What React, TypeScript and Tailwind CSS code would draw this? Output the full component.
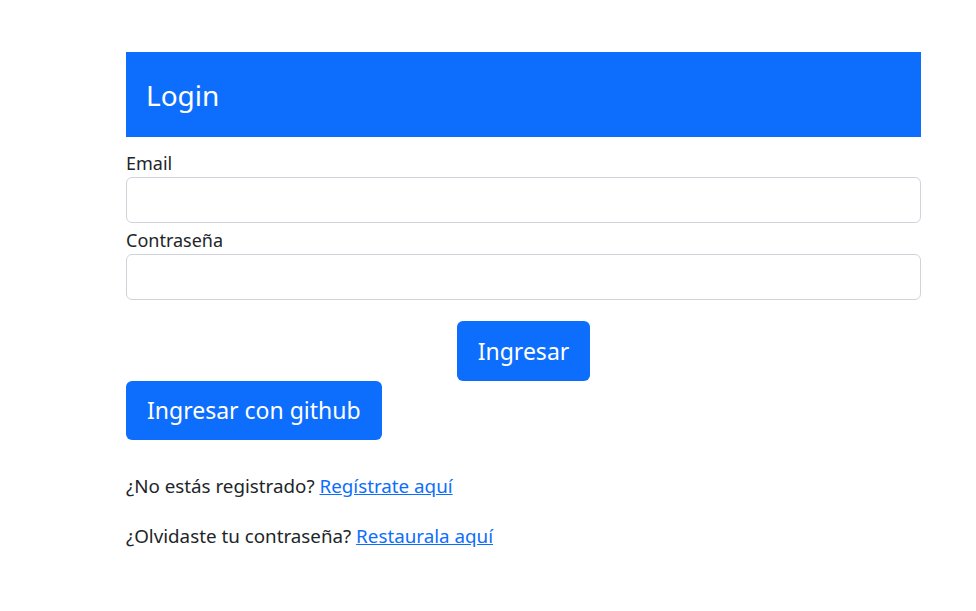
import React from 'react';

const Login = () => {
  return (
    <div className="min-h-[611px] bg-white text-[#212529] font-['Noto_Sans','Open_Sans',sans-serif]">
      <div className="ml-[126px] mr-[55px] pt-[52px]">
        <div className="h-[85px] bg-[#0d6efd] flex items-center px-5">
          <h2 className="text-[28px] text-white leading-none mt-px">Login</h2>
        </div>
        <form className="mt-[14px]">
          <label className="block h-6 text-[18px] leading-6">Email</label>
          <input type="email" className="mt-[2px] block w-full h-[46px] border border-[#ced4da] rounded-md bg-white" />
          <label className="block mt-[5px] h-6 text-[18px] leading-6">Contraseña</label>
          <input type="password" className="mt-[2px] block w-full h-[46px] border border-[#ced4da] rounded-md bg-white" />
          <div className="flex justify-center mt-[21px]">
            <button type="button" className="h-[60px] px-[21px] rounded-md bg-[#0d6efd] text-white text-[23px]">
              Ingresar
            </button>
          </div>
          <button type="button" className="h-[59px] px-[21px] rounded-md bg-[#0d6efd] text-white text-[23px]">
            Ingresar con github
          </button>
        </form>
        <p className="mt-[34px] leading-6 text-[18.8px]">
          ¿No estás registrado? <a href="#" className="text-[#0d6efd] underline">Regístrate aquí</a>
        </p>
        <p className="mt-[26px] leading-6 text-[18.8px]">
          ¿Olvidaste tu contraseña? <a href="#" className="text-[#0d6efd] underline">Restaurala aquí</a>
        </p>
      </div>
    </div>
  );
};

export default Login;
